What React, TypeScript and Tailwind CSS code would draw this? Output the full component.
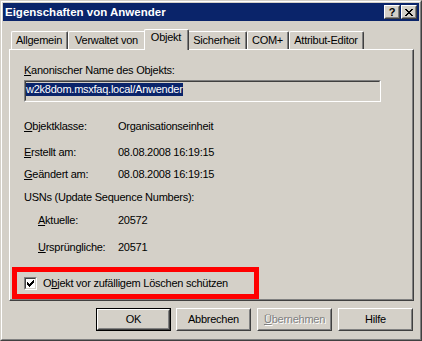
import React from "react";

function CapBtn({ children }: { children: React.ReactNode }) {
  return (
    <div className="w-[16px] h-[14px] border border-t-white border-l-white border-r-[#404040] border-b-[#404040]">
      <div className="w-full h-full bg-[#d4d0c8] border border-t-[#d4d0c8] border-l-[#d4d0c8] border-r-[#808080] border-b-[#808080] flex items-center justify-center">
        {children}
      </div>
    </div>
  );
}

function Tab({ label, cls, selected }: { label: string; cls: string; selected?: boolean }) {
  if (selected) {
    return (
      <div className="relative z-10 -mx-[2px] h-[21px] w-[45px] bg-[#d4d0c8] border-t border-l border-t-white border-l-white border-r border-r-[#404040] rounded-tl-[2px] rounded-tr-[2px]">
        <div className="h-full border-r border-r-[#808080] flex justify-center pt-px">
          <span>{label}</span>
        </div>
      </div>
    );
  }
  return (
    <div className={"mt-[2px] h-[18px] bg-[#d4d0c8] border-t border-l border-t-white border-l-white border-r border-r-[#404040] rounded-tl-[2px] rounded-tr-[2px] " + cls}>
      <div className="h-full border-r border-r-[#808080] flex items-center justify-center">
        <span>{label}</span>
      </div>
    </div>
  );
}

function Btn({ children, def, cls }: { children: React.ReactNode; def?: boolean; cls?: string }) {
  const inner = (
    <div className="h-full w-full border border-t-white border-l-white border-r-[#404040] border-b-[#404040]">
      <div className="h-full w-full border border-t-[#d4d0c8] border-l-[#d4d0c8] border-r-[#808080] border-b-[#808080] flex items-center justify-center">
        {children}
      </div>
    </div>
  );
  if (def) return <div className={"w-[75px] h-[23px] border border-black " + (cls || "")}>{inner}</div>;
  return <div className={"w-[75px] h-[23px] " + (cls || "")}>{inner}</div>;
}

function U({ children }: { children: React.ReactNode }) {
  return <span className="underline underline-offset-[1px]">{children}</span>;
}

function Row({ label, value, cls }: { label: React.ReactNode; value: string; cls: string }) {
  return (
    <div className={"flex h-[13px] " + cls}>
      <div className="w-[94px] shrink-0">{label}</div>
      <div>{value}</div>
    </div>
  );
}

function SubRow({ label, value, cls }: { label: React.ReactNode; value: string; cls: string }) {
  return (
    <div className={"flex h-[13px] pl-[14px] " + cls}>
      <div className="w-[80px] shrink-0">{label}</div>
      <div>{value}</div>
    </div>
  );
}

export default function App() {
  return (
    <div className="w-[422px] h-[341px] bg-[#d4d0c8] font-['Liberation_Sans',Arial,sans-serif] text-[11px] tracking-[-0.25px] leading-[13px] text-black">
      <div className="w-full h-full border border-t-[#d4d0c8] border-l-[#d4d0c8] border-r-[#404040] border-b-[#404040]">
        <div className="w-full h-full border border-t-white border-l-white border-r-[#808080] border-b-[#808080] flex flex-col">
          {/* Title bar */}
          <div className="mx-px mt-px h-[18px] bg-[#0a246a] flex items-center pl-[2px] pr-[2px]">
            <span className="flex-1 text-white font-bold text-[11.5px] tracking-[0px]">Eigenschaften von Anwender</span>
            <CapBtn>
              <span className="font-bold text-[11px] leading-[11px] tracking-[0px]">?</span>
            </CapBtn>
            <div className="w-px" />
            <CapBtn>
              <svg width="8" height="7" viewBox="0 0 8 7" shapeRendering="crispEdges">
                <path
                  fill="#000"
                  d="M0 0h2v1h-2z M6 0h2v1h-2z M1 1h2v1h-2z M5 1h2v1h-2z M2 2h4v1h-4z M3 3h2v1h-2z M2 4h4v1h-4z M1 5h2v1h-2z M5 5h2v1h-2z M0 6h2v1h-2z M6 6h2v1h-2z"
                />
              </svg>
            </CapBtn>
          </div>

          {/* Tabs */}
          <div className="mt-[8px] ml-[9px] h-[20px] flex items-start">
            <Tab label="Allgemein" cls="w-[57px]" />
            <Tab label="Verwaltet von" cls="w-[78px]" />
            <Tab label="Objekt" cls="" selected />
            <Tab label="Sicherheit" cls="w-[60px]" />
            <Tab label="COM+" cls="w-[42px]" />
            <Tab label="Attribut-Editor" cls="w-[75px]" />
          </div>

          {/* Panel */}
          <div className="ml-[7px] w-[405px] h-[252px] border-t border-l border-t-white border-l-white border-r border-b border-r-[#404040] border-b-[#404040]">
            <div className="w-full h-full border-r border-b border-r-[#808080] border-b-[#808080] pl-[14px] pt-[14px] flex flex-col">
              <div className="h-[13px]">
                <U>K</U>anonischer Name des Objekts:
              </div>
              <div className="mt-[3px] w-[357px] h-[22px] border border-t-[#808080] border-l-[#808080] border-r-white border-b-white">
                <div className="w-full h-full border border-t-[#404040] border-l-[#404040] border-r-[#d4d0c8] border-b-[#d4d0c8] pt-px">
                  <span className="bg-[#0a246a] text-white inline-block h-[13px]">w2k8dom.msxfaq.local/Anwender</span>
                </div>
              </div>
              <Row cls="mt-[18px]" label={<><U>O</U>bjektklasse:</>} value="Organisationseinheit" />
              <Row cls="mt-[13px]" label={<><U>E</U>rstellt am:</>} value="08.08.2008 16:19:15" />
              <Row cls="mt-[9px]" label={<><U>G</U>eändert am:</>} value="08.08.2008 16:19:15" />
              <div className="mt-[10px] h-[13px]">USNs (Update Sequence Numbers):</div>
              <SubRow cls="mt-[10px]" label={<><U>A</U>ktuelle:</>} value="20572" />
              <SubRow cls="mt-[14px]" label={<><U>U</U>rsprüngliche:</>} value="20571" />
              <div className="mt-[13px] -ml-[12px] w-[247px] h-[32px] border-[5px] border-[#ff0000] flex items-center pl-[7px]">
                <div className="w-[13px] h-[13px] border border-t-[#808080] border-l-[#808080] border-r-white border-b-white">
                  <div className="w-full h-full bg-white border border-t-[#404040] border-l-[#404040] border-r-[#d4d0c8] border-b-[#d4d0c8] flex items-start justify-start pl-px pt-px">
                    <svg width="7" height="7" viewBox="0 0 7 7" shapeRendering="crispEdges">
                      <path
                        fill="#000"
                        d="M0 2h1v3h-1z M1 3h1v3h-1z M2 4h1v3h-1z M3 3h1v3h-1z M4 2h1v3h-1z M5 1h1v3h-1z M6 0h1v3h-1z"
                      />
                    </svg>
                  </div>
                </div>
                <span className="ml-[6px]">
                  O<U>b</U>jekt vor zufälligem Löschen schützen
                </span>
              </div>
            </div>
          </div>

          {/* Buttons */}
          <div className="mt-[7px] flex justify-end pr-[7px]">
            <Btn def>OK</Btn>
            <Btn cls="ml-[5px]">Abbrechen</Btn>
            <Btn cls="ml-[6px]">
              <span className="text-[#808080] [text-shadow:1px_1px_0_#fff]">
                <span className="underline underline-offset-[1px]">Ü</span>bernehmen
              </span>
            </Btn>
            <Btn cls="ml-[6px]">Hilfe</Btn>
          </div>
        </div>
      </div>
    </div>
  );
}
